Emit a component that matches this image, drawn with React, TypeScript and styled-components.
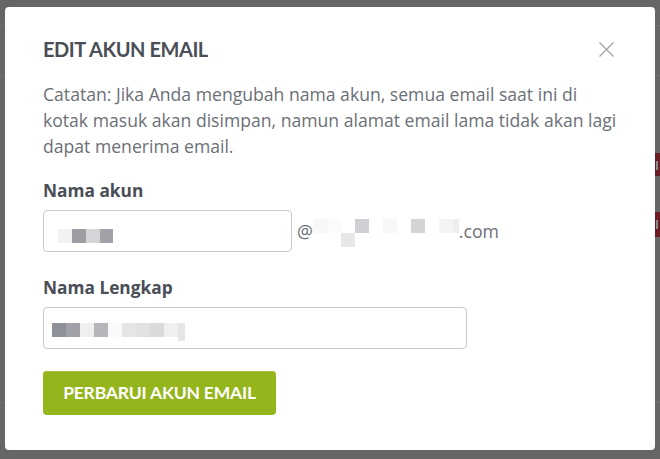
import React from "react";
import styled, { createGlobalStyle } from "styled-components";

const Global = createGlobalStyle`
  html, body { margin: 0; padding: 0; }
  body { background: #666666; }
  * { box-sizing: border-box; }
`;

const Backdrop = styled.div`
  width: 660px;
  height: 459px;
  padding: 7px 5px 9px 5px;
  background-color: #666666;
  background-image:
    linear-gradient(#6f6f6f, #6f6f6f),
    linear-gradient(#6f6f6f, #6f6f6f),
    linear-gradient(#6f6f6f, #6f6f6f),
    linear-gradient(#8a8a8a, #8a8a8a),
    linear-gradient(#6b1d25, #6b1d25),
    linear-gradient(#8a8a8a, #8a8a8a),
    linear-gradient(#6b1d25, #6b1d25);
  background-size:
    100% 1px,
    100% 1px,
    100% 1px,
    2px 9px,
    5px 23px,
    2px 9px,
    5px 25px;
  background-position:
    0 25px,
    0 75px,
    0 402px,
    656px 161px,
    655px 153px,
    656px 220px,
    655px 212px;
  background-repeat: no-repeat;
  display: flex;
`;

const Modal = styled.div`
  flex: 1;
  background: #ffffff;
  border-radius: 4px;
  padding: 30px 41px 0 38px;
  display: flex;
  flex-direction: column;
`;

const Header = styled.div`
  display: flex;
  align-items: center;
  justify-content: space-between;
`;

const Title = styled.h2`
  margin: 0;
  font-family: Lato, "Open Sans", sans-serif;
  font-weight: 700;
  font-size: 20px;
  line-height: 24px;
  color: #4a4e56;
  letter-spacing: -0.45px;
`;

const CloseButton = styled.button`
  border: 0;
  background: transparent;
  padding: 0;
  width: 15px;
  height: 15px;
  display: flex;
  cursor: pointer;
`;

const Note = styled.p`
  margin: 19.5px -20px 0 0;
  font-family: "Open Sans", sans-serif;
  font-size: 17.6px;
  line-height: 26px;
  color: #6c6f76;
`;

const Label = styled.label<{ $top: number }>`
  display: block;
  font-family: "Open Sans", sans-serif;
  font-weight: 700;
  font-size: 17.3px;
  line-height: 24px;
  color: #4a4e56;
  margin-top: ${(p) => p.$top}px;
`;

const FieldRow = styled.div`
  display: flex;
  align-items: center;
  margin-top: 7px;
`;

const Field = styled.div<{ $w: number; $pt: number; $pl: number }>`
  width: ${(p) => p.$w}px;
  height: 42px;
  border: 1px solid #cbcbcb;
  border-radius: 4px;
  background: #fff;
  padding: ${(p) => p.$pt}px 0 0 ${(p) => p.$pl}px;
`;

const Domain = styled.div`
  display: flex;
  align-items: center;
  margin-left: 5px;
  font-family: "Open Sans", sans-serif;
  font-size: 17.7px;
  color: #6c6f76;
  line-height: 22px;
`;

const Mosaic = styled.div<{ $mt: number }>`
  display: grid;
  grid-auto-columns: max-content;
  grid-auto-rows: max-content;
  margin-top: ${(p) => p.$mt}px;
`;

const Cell = styled.span<{ $c: number; $r: number; $color: string; $w?: number; $h?: number }>`
  grid-column: ${(p) => p.$c};
  grid-row: ${(p) => p.$r};
  width: ${(p) => p.$w ?? 14}px;
  height: ${(p) => p.$h ?? 14}px;
  background: ${(p) => p.$color};
`;

const SubmitButton = styled.button`
  align-self: flex-start;
  margin-top: 22px;
  width: 233px;
  height: 44px;
  border: 0;
  border-radius: 4px;
  background: #95b51c;
  box-shadow: inset 0 1px 0 #a9c43e;
  color: #ffffff;
  font-family: Lato, "Open Sans", sans-serif;
  font-weight: 700;
  font-size: 17.5px;
  letter-spacing: -0.2px;
  padding: 0;
  cursor: pointer;
`;

type C = { c: number; r: number; color: string; w?: number; h?: number };

const userCells: C[] = [
  { c: 1, r: 1, color: "#f2f2f3" },
  { c: 2, r: 1, color: "#9b9da2" },
  { c: 3, r: 1, color: "#d4d5d8" },
  { c: 4, r: 1, color: "#a0a2a7", w: 13 },
];

const domainCells: C[] = [
  { c: 1, r: 1, color: "#f8f8f8" },
  { c: 2, r: 1, color: "#fbfbfb" },
  { c: 3, r: 2, color: "#e8e8ea" },
  { c: 4, r: 1, color: "#cfd0d3" },
  { c: 5, r: 1, color: "#ffffff" },
  { c: 6, r: 1, color: "#f7f7f7" },
  { c: 7, r: 1, color: "#ffffff" },
  { c: 8, r: 1, color: "#d3d4d6" },
  { c: 9, r: 1, color: "#ffffff" },
  { c: 10, r: 1, color: "#f4f4f4" },
  { c: 11, r: 1, color: "#eeeeee", w: 6 },
];

const nameCells: C[] = [
  { c: 1, r: 1, color: "#8e9197" },
  { c: 2, r: 1, color: "#a0a2a7" },
  { c: 3, r: 1, color: "#efeff0" },
  { c: 4, r: 1, color: "#b4b6ba" },
  { c: 5, r: 1, color: "#fafafa" },
  { c: 6, r: 1, color: "#e5e5e7" },
  { c: 7, r: 1, color: "#e1e1e3" },
  { c: 8, r: 1, color: "#dadadc" },
  { c: 9, r: 1, color: "#efefef" },
  { c: 10, r: 1, color: "#e6e6e6", w: 7, h: 18 },
];

const Pixels = ({ cells, mt }: { cells: C[]; mt: number }) => (
  <Mosaic $mt={mt}>
    {cells.map((x, i) => (
      <Cell key={i} $c={x.c} $r={x.r} $color={x.color} $w={x.w} $h={x.h} />
    ))}
  </Mosaic>
);

export default function App() {
  return (
    <>
      <Global />
      <Backdrop>
        <Modal>
          <Header>
            <Title>EDIT AKUN EMAIL</Title>
            <CloseButton aria-label="Tutup">
              <svg width="15" height="15" viewBox="0 0 15 15">
                <path d="M0.5 0.5 L14.5 14.5 M14.5 0.5 L0.5 14.5" stroke="#a3a3a3" strokeWidth="1.3" />
              </svg>
            </CloseButton>
          </Header>
          <Note>
            Catatan: Jika Anda mengubah nama akun, semua email saat ini di
            <br />
            kotak masuk akan disimpan, namun alamat email lama tidak akan lagi
            <br />
            dapat menerima email.
          </Note>
          <Label $top={20}>Nama akun</Label>
          <FieldRow>
            <Field $w={249} $pt={18} $pl={14}>
              <Pixels cells={userCells} mt={0} />
            </Field>
            <Domain>
              <span>@</span>
              <Pixels cells={domainCells} mt={4} />
              <span>.com</span>
            </Domain>
          </FieldRow>
          <Label $top={24}>Nama Lengkap</Label>
          <FieldRow>
            <Field $w={424} $pt={15} $pl={8}>
              <Pixels cells={nameCells} mt={0} />
            </Field>
          </FieldRow>
          <SubmitButton>PERBARUI AKUN EMAIL</SubmitButton>
        </Modal>
      </Backdrop>
    </>
  );
}
